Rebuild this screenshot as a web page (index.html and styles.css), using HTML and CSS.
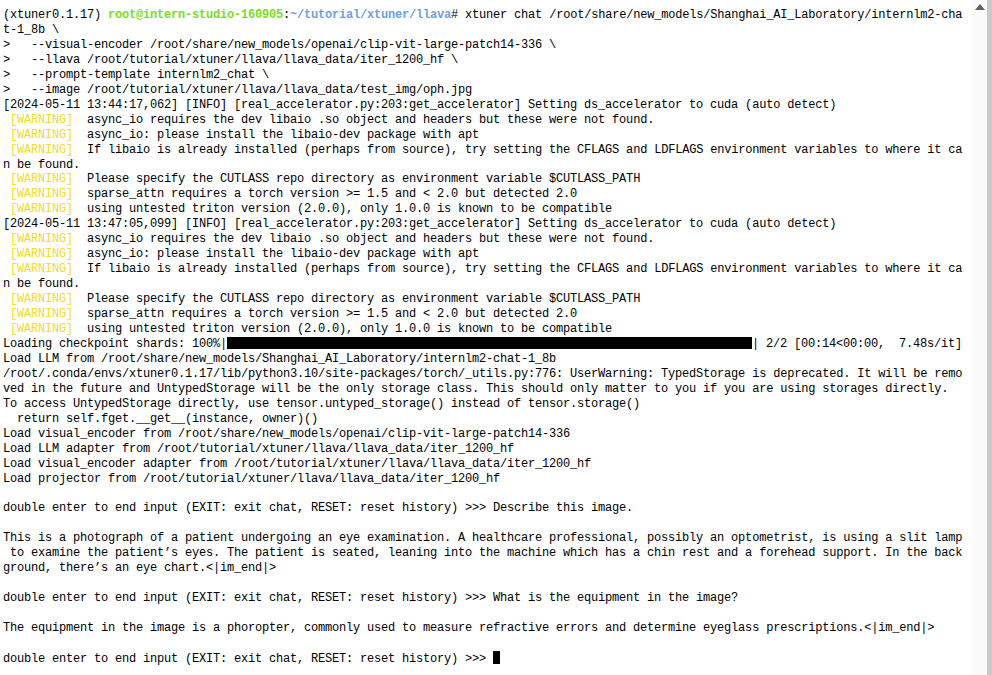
FILE: index.html
```html
<!DOCTYPE html>
<html>
<head>
<meta charset="utf-8">
<link rel="stylesheet" href="styles.css">
</head>
<body>
<div class="window">
<pre class="term">(xtuner0.1.17) <span class="usr">root@intern-studio-160905</span>:<span class="path">~/tutorial/xtuner/llava</span># xtuner chat /root/share/new_models/Shanghai_AI_Laboratory/internlm2-cha
t-1_8b \
&gt;   --visual-encoder /root/share/new_models/openai/clip-vit-large-patch14-336 \
&gt;   --llava /root/tutorial/xtuner/llava/llava_data/iter_1200_hf \
&gt;   --prompt-template internlm2_chat \
&gt;   --image /root/tutorial/xtuner/llava/llava_data/test_img/oph.jpg
[2024-05-11 13:44:17,062] [INFO] [real_accelerator.py:203:get_accelerator] Setting ds_accelerator to cuda (auto detect)
 <span class="warn">[WARNING]</span>  async_io requires the dev libaio .so object and headers but these were not found.
 <span class="warn">[WARNING]</span>  async_io: please install the libaio-dev package with apt
 <span class="warn">[WARNING]</span>  If libaio is already installed (perhaps from source), try setting the CFLAGS and LDFLAGS environment variables to where it ca
n be found.
 <span class="warn">[WARNING]</span>  Please specify the CUTLASS repo directory as environment variable $CUTLASS_PATH
 <span class="warn">[WARNING]</span>  sparse_attn requires a torch version &gt;= 1.5 and &lt; 2.0 but detected 2.0
 <span class="warn">[WARNING]</span>  using untested triton version (2.0.0), only 1.0.0 is known to be compatible
[2024-05-11 13:47:05,099] [INFO] [real_accelerator.py:203:get_accelerator] Setting ds_accelerator to cuda (auto detect)
 <span class="warn">[WARNING]</span>  async_io requires the dev libaio .so object and headers but these were not found.
 <span class="warn">[WARNING]</span>  async_io: please install the libaio-dev package with apt
 <span class="warn">[WARNING]</span>  If libaio is already installed (perhaps from source), try setting the CFLAGS and LDFLAGS environment variables to where it ca
n be found.
 <span class="warn">[WARNING]</span>  Please specify the CUTLASS repo directory as environment variable $CUTLASS_PATH
 <span class="warn">[WARNING]</span>  sparse_attn requires a torch version &gt;= 1.5 and &lt; 2.0 but detected 2.0
 <span class="warn">[WARNING]</span>  using untested triton version (2.0.0), only 1.0.0 is known to be compatible
Loading checkpoint shards: 100%|<span class="bar"></span>| 2/2 [00:14&lt;00:00,  7.48s/it]
Load LLM from /root/share/new_models/Shanghai_AI_Laboratory/internlm2-chat-1_8b
/root/.conda/envs/xtuner0.1.17/lib/python3.10/site-packages/torch/_utils.py:776: UserWarning: TypedStorage is deprecated. It will be remo
ved in the future and UntypedStorage will be the only storage class. This should only matter to you if you are using storages directly.
To access UntypedStorage directly, use tensor.untyped_storage() instead of tensor.storage()
  return self.fget.__get__(instance, owner)()
Load visual_encoder from /root/share/new_models/openai/clip-vit-large-patch14-336
Load LLM adapter from /root/tutorial/xtuner/llava/llava_data/iter_1200_hf
Load visual_encoder adapter from /root/tutorial/xtuner/llava/llava_data/iter_1200_hf
Load projector from /root/tutorial/xtuner/llava/llava_data/iter_1200_hf

double enter to end input (EXIT: exit chat, RESET: reset history) &gt;&gt;&gt; Describe this image.

This is a photograph of a patient undergoing an eye examination. A healthcare professional, possibly an optometrist, is using a slit lamp
 to examine the patient’s eyes. The patient is seated, leaning into the machine which has a chin rest and a forehead support. In the back
ground, there’s an eye chart.&lt;|im_end|&gt;

double enter to end input (EXIT: exit chat, RESET: reset history) &gt;&gt;&gt; What is the equipment in the image?

The equipment in the image is a phoropter, commonly used to measure refractive errors and determine eyeglass prescriptions.&lt;|im_end|&gt;

double enter to end input (EXIT: exit chat, RESET: reset history) &gt;&gt;&gt; <span class="cursor"></span></pre>
<div class="scrollbar">
<div class="track"><span class="arrow"></span></div>
<div class="thumb"></div>
</div>
</div>
</body>
</html>
```
FILE: styles.css
```css
html, body {
  margin: 0;
  padding: 0;
  background: #ffffff;
  height: 100%;
  overflow: hidden;
}
.window {
  display: flex;
  height: 675px;
  width: 992px;
}
.term {
  flex: 1;
  margin: 0;
  padding: 8px 0 0 3px;
  font-family: "Liberation Mono", "DejaVu Sans Mono", monospace;
  font-size: 12px;
  letter-spacing: -0.2px;
  line-height: 14.95px;
  color: #000000;
  white-space: pre;
  overflow: hidden;
}
.usr {
  color: #7ddc1f;
  font-weight: bold;
}
.path {
  color: #6f9fde;
  font-weight: bold;
}
.warn {
  color: #f2dc2c;
}
.bar {
  display: inline-block;
  width: 525px;
  height: 12px;
  background: #000000;
  vertical-align: -2px;
}
.cursor {
  display: inline-block;
  width: 7px;
  height: 13px;
  background: #000000;
  vertical-align: -2px;
}
.scrollbar {
  width: 20px;
  display: flex;
  background: #fafafa;
}
.track {
  flex: 1;
  display: flex;
  justify-content: center;
  padding-top: 4px;
}
.arrow {
  width: 0;
  height: 0;
  border-left: 5px solid transparent;
  border-right: 5px solid transparent;
  border-bottom: 6px solid #606060;
}
.thumb {
  width: 5px;
  background: #c9c9c9;
}
```
